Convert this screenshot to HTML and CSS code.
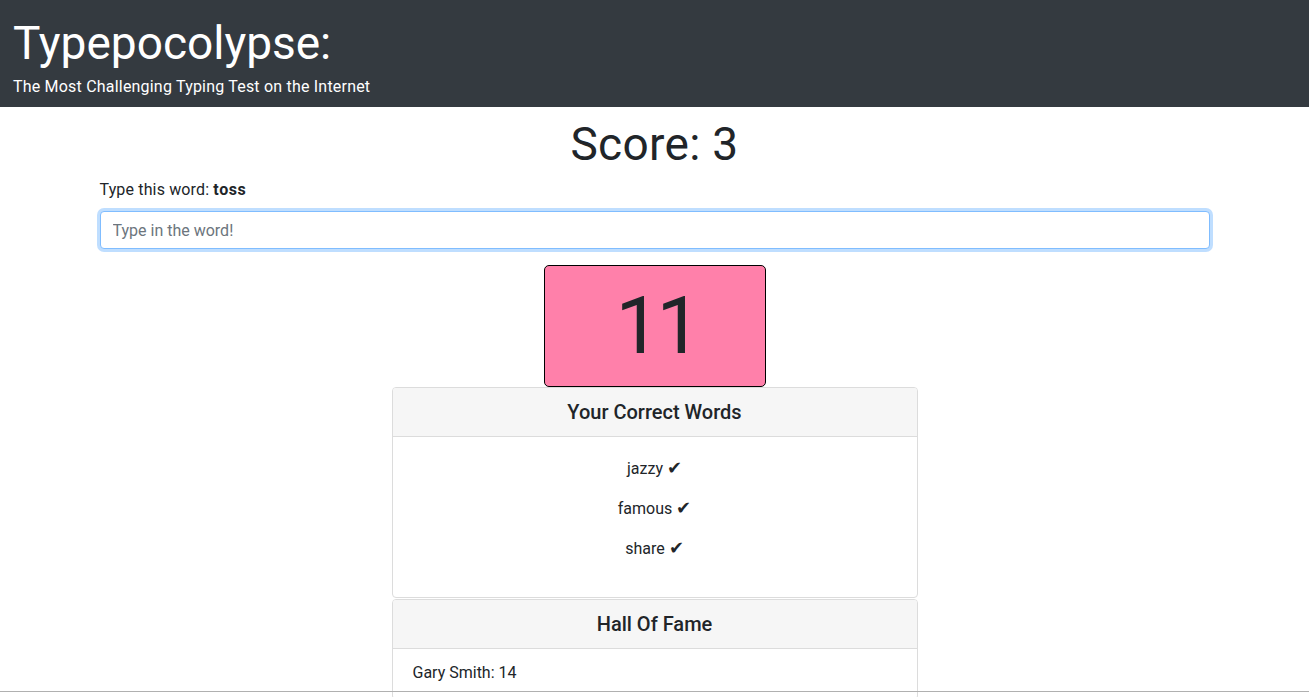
FILE: index.html
```html
<!DOCTYPE html>
<html lang="en">
<head>
<meta charset="utf-8">
<title>Typepocolypse</title>
<link rel="stylesheet" href="styles.css">
</head>
<body>
<header class="banner">
  <h1 class="banner-title">Typepocolypse:</h1>
  <p class="banner-sub">The Most Challenging Typing Test on the Internet</p>
</header>
<main class="container">
  <h2 class="score">Score: 3</h2>
  <p class="prompt">Type this word: <strong>toss</strong></p>
  <input class="word-input" type="text" placeholder="Type in the word!">
  <div class="timer">11</div>
  <section class="card">
    <h3 class="card-header">Your Correct Words</h3>
    <div class="card-body words">
      <p>jazzy <span class="tick">✔</span></p>
      <p>famous <span class="tick">✔</span></p>
      <p>share <span class="tick">✔</span></p>
    </div>
  </section>
  <section class="card">
    <h3 class="card-header">Hall Of Fame</h3>
    <div class="card-body fame">
      <p>Gary Smith: 14</p>
    </div>
  </section>
</main>
<div class="edge"></div>
</body>
</html>
```
FILE: styles.css
```css
* { box-sizing: border-box; }
html, body { margin: 0; padding: 0; }
body {
  font-family: Roboto, "Liberation Sans", sans-serif;
  font-size: 16px;
  line-height: 1.5;
  color: #212529;
  background: #fff;
  overflow: hidden;
  height: 697px;
}
.banner {
  background: #343a40;
  color: #fff;
  height: 107px;
  padding: 16px 13px 0;
}
.banner-title {
  margin: 0;
  font-size: 46px;
  font-weight: 400;
  line-height: 1.2;
}
.banner-sub {
  margin: 6px 0 0;
  font-size: 16px;
  line-height: 1.2;
  letter-spacing: 0.2px;
}
.container {
  width: 1110px;
  margin: 0 auto;
  display: flex;
  flex-direction: column;
  align-items: center;
}
.score {
  margin: 10px 0 0;
  font-size: 46px;
  font-weight: 400;
  line-height: 1.2;
  letter-spacing: 0.3px;
}
.prompt {
  align-self: stretch;
  margin: 6px 0 9px;
  font-size: 16px;
  letter-spacing: 0.15px;
}
.prompt strong { font-weight: 700; letter-spacing: 0.6px; }
.word-input {
  align-self: stretch;
  height: 38px;
  padding: 6px 12px;
  font: inherit;
  color: #495057;
  border: 1px solid #80bdff;
  border-radius: 4px;
  box-shadow: 0 0 0 3px rgba(0,123,255,.25);
  outline: none;
}
.word-input::placeholder { color: #6c757d; }
.timer {
  margin-top: 16px;
  width: 222px;
  height: 122px;
  background: #ff80aa;
  border: 1px solid #000;
  border-radius: 5px;
  display: flex;
  align-items: center;
  justify-content: center;
  font-size: 80px;
  line-height: 1;
  letter-spacing: -4px;
  padding-left: 4px;
}
.card {
  width: 526px;
  border: 1px solid #dcdcdc;
  border-radius: 4px;
  overflow: hidden;
}
.card + .card { margin-top: 1px; }
.card-header {
  margin: 0;
  height: 49px;
  background: #f6f6f6;
  border-bottom: 1px solid #dcdcdc;
  text-align: center;
  font-size: 20px;
  font-weight: 500;
  line-height: 48px;
}
.card-body p { margin: 0; }
.words {
  padding: 20px 20px 20px;
  text-align: center;
}
.words p { height: 40px; line-height: 24px; }
.tick { font-size: 18px; line-height: 1; }
.fame { padding: 12px 20px 14px; }
.edge {
  position: fixed;
  left: 0;
  right: 0;
  bottom: 5px;
  height: 1px;
  background: #b0b0b0;
}
```
